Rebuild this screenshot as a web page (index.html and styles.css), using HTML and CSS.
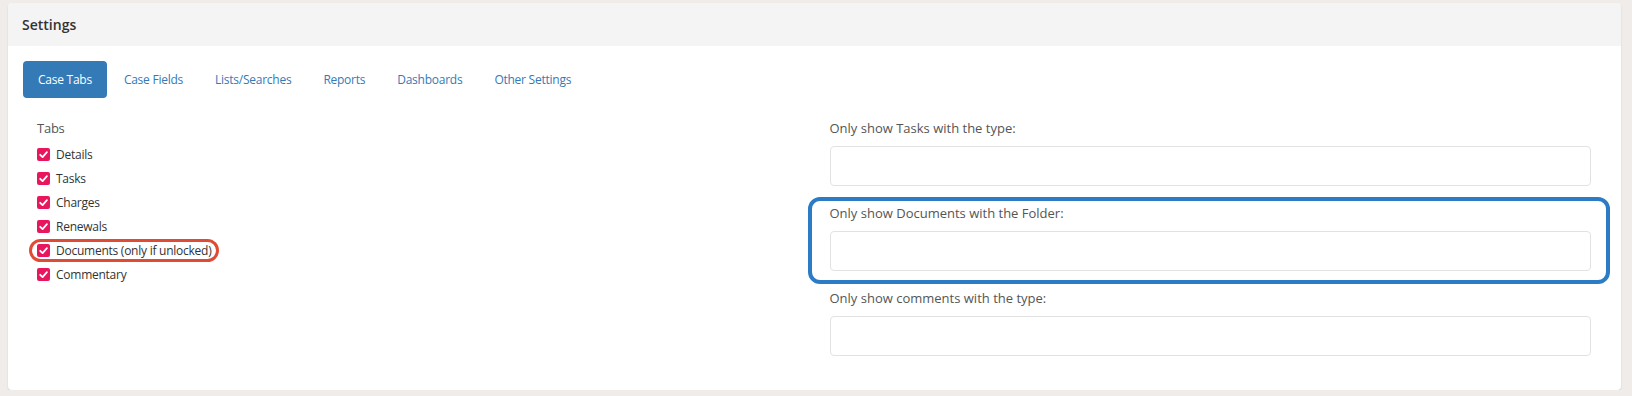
FILE: index.html
```html
<!DOCTYPE html>
<html lang="en">
<head>
  <meta charset="UTF-8" />
  <title>Settings</title>
  <link rel="stylesheet" href="styles.css">
</head>
<body>
  <div class="panel">
    <div class="panel-heading">Settings</div>
    <div class="panel-body">
      <ul class="nav-pills">
        <li class="active"><a href="#">Case Tabs</a></li>
        <li><a href="#">Case Fields</a></li>
        <li><a href="#">Lists/Searches</a></li>
        <li><a href="#">Reports</a></li>
        <li><a href="#">Dashboards</a></li>
        <li><a href="#">Other Settings</a></li>
      </ul>

      <div class="tab-content">
        <!-- which tabs show on a case -->
        <div class="col">
          <div class="col-title">Tabs</div>
          <ul class="tab-list">
            <li><span class="check"><svg viewBox="0 0 13 13"><path d="M3.2 6.8 L5.6 9.1 L9.9 4.2" /></svg></span>Details</li>
            <li><span class="check"><svg viewBox="0 0 13 13"><path d="M3.2 6.8 L5.6 9.1 L9.9 4.2" /></svg></span>Tasks</li>
            <li><span class="check"><svg viewBox="0 0 13 13"><path d="M3.2 6.8 L5.6 9.1 L9.9 4.2" /></svg></span>Charges</li>
            <li><span class="check"><svg viewBox="0 0 13 13"><path d="M3.2 6.8 L5.6 9.1 L9.9 4.2" /></svg></span>Renewals</li>
            <li class="marked"><span class="check"><svg viewBox="0 0 13 13"><path d="M3.2 6.8 L5.6 9.1 L9.9 4.2" /></svg></span>Documents (only if unlocked)<span class="ring-red"></span></li>
            <li><span class="check"><svg viewBox="0 0 13 13"><path d="M3.2 6.8 L5.6 9.1 L9.9 4.2" /></svg></span>Commentary</li>
          </ul>
        </div>

        <!-- filters -->
        <div class="col">
          <div class="field">
            <label for="task-type">Only show Tasks with the type:</label>
            <input id="task-type" type="text" />
          </div>
          <div class="field marked">
            <label for="doc-folder">Only show Documents with the Folder:</label>
            <input id="doc-folder" type="text" />
            <span class="ring-blue"></span>
          </div>
          <div class="field">
            <label for="comment-type">Only show comments with the type:</label>
            <input id="comment-type" type="text" />
          </div>
        </div>
      </div>
    </div>
  </div>
</body>
</html>
```

FILE: styles.css
```css
body {
  margin: 0;
  font-family: "Open Sans", "Liberation Sans", sans-serif;
  font-size: 12px;
  letter-spacing: -0.25px;
  color: #333;
  background-color: #f0ece9;
}

.panel {
  margin: 3px 11px 0 8px;
  background: #fff;
  border-radius: 4px;
  box-shadow: 0 1px 2px rgba(0, 0, 0, 0.12);
  overflow: hidden;
}

.panel-heading {
  background: #f4f4f4;
  padding: 12px 14px;
  line-height: 19px;
  font-size: 14px;
  font-weight: 600;
  letter-spacing: 0;
  color: #333;
}

.panel-body {
  padding: 15px 15px 16px;
}

.nav-pills {
  display: flex;
  gap: 2px;
  list-style: none;
  margin: 0;
  padding: 0;
}

.nav-pills a {
  display: block;
  padding: 10px 15px;
  line-height: 17px;
  border-radius: 4px;
  color: #337ab7;
  text-decoration: none;
}

.nav-pills .active a {
  background-color: #337ab7;
  color: #fff;
}

.tab-content {
  display: grid;
  grid-template-columns: 1fr 1fr;
  margin-top: 21px;
}

.col {
  padding: 0 15px;
}

.col-title {
  font-size: 13px;
  line-height: 18px;
  color: #555;
  margin-left: -1px;
}

.tab-list {
  list-style: none;
  margin: 5px 0 0;
  padding: 0;
}

.tab-list li {
  display: flex;
  align-items: center;
  width: fit-content;
  height: 24px;
  position: relative;
}

.check {
  width: 13px;
  height: 13px;
  margin: 0 6px 0 -1px;
  background: #e8175d;
  border-radius: 2px;
}

.check svg {
  display: block;
  width: 13px;
  height: 13px;
  fill: none;
  stroke: #fff;
  stroke-width: 1.8;
  stroke-linecap: round;
  stroke-linejoin: round;
}

.ring-red {
  position: absolute;
  top: 1px;
  bottom: 0;
  left: -9px;
  right: -8px;
  border: 3px solid #e04b35;
  border-radius: 13px;
}

.field {
  position: relative;
  margin-bottom: 18px;
}

.field label {
  display: block;
  font-size: 13px;
  line-height: 19px;
  letter-spacing: 0;
  color: #555;
  margin-bottom: 8px;
}

.field input {
  display: block;
  box-sizing: border-box;
  width: 100%;
  height: 40px;
  border: 1px solid #e2e2e2;
  border-radius: 4px;
  font: inherit;
}

.ring-blue {
  position: absolute;
  top: -7px;
  bottom: -13px;
  left: -22px;
  right: -19px;
  border: 4px solid #2b7cc4;
  border-radius: 12px;
}
```
